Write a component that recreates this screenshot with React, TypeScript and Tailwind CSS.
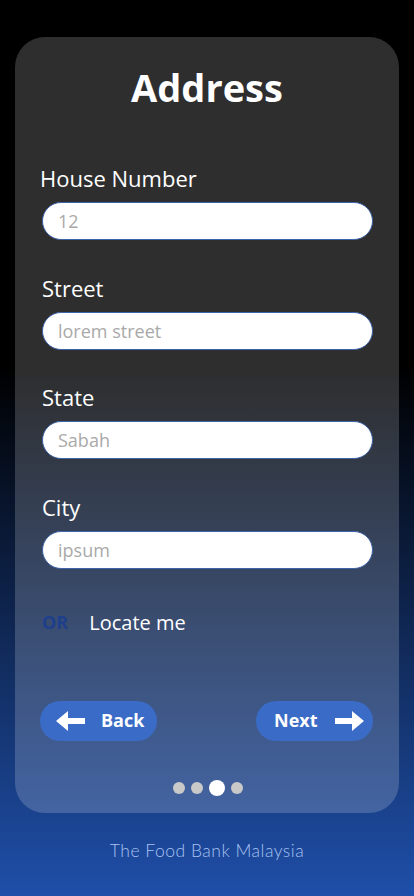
import React from "react";

const fields = [
  { label: "House Number", placeholder: "12" },
  { label: "Street", placeholder: "lorem street" },
  { label: "State", placeholder: "Sabah" },
  { label: "City", placeholder: "ipsum" },
];

function LeftArrow() {
  return (
    <svg width="29" height="20" viewBox="0 0 29 20">
      <path d="M0 10 L12 0 L12 7 L29 7 L29 13 L12 13 L12 20 Z" fill="#fff" />
    </svg>
  );
}

function RightArrow() {
  return (
    <svg width="29" height="20" viewBox="0 0 29 20">
      <path d="M29 10 L17 0 L17 7 L0 7 L0 13 L17 13 L17 20 Z" fill="#fff" />
    </svg>
  );
}

export default function App() {
  return (
    <div
      className="w-[414px] min-h-[896px] flex flex-col items-center bg-[linear-gradient(to_bottom,#000_41%,#1f4fa9_100%)]"
      style={{ fontFamily: '"Open Sans", "Noto Sans", sans-serif' }}
    >
      <div className="mt-[37px] w-[384px] h-[776px] rounded-[30px] bg-white/[0.18] flex flex-col px-[25px]">
        <h1 className="mt-[24px] text-center text-white font-bold text-[38px] leading-[52px]">
          Address
        </h1>

        <div className="mt-[50px] flex flex-col gap-[32.5px]">
          {fields.map((f, i) => (
            <div key={f.label} className="flex flex-col">
              <label
                className={`text-white text-[22px] leading-[30px] mb-[9px] ${
                  i === 0 ? "ml-[0px]" : "ml-[2px]"
                }`}
              >
                {f.label}
              </label>
              <input
                type="text"
                placeholder={f.placeholder}
                className="ml-[2px] w-[331px] h-[38px] rounded-full bg-white border border-[#3d63a8] px-[15px] text-[18px] text-gray-700 outline-none placeholder:text-[#a9a9a9]"
              />
            </div>
          ))}
        </div>

        <div className="mt-[39px] ml-[2px] flex items-center gap-[21px]">
          <span className="text-[#1d3f8c] font-bold text-[18px]">OR</span>
          <span className="text-white text-[20px]">Locate me</span>
        </div>

        <div className="mt-[63px] flex items-center justify-between">
          <button className="w-[117px] h-[40px] rounded-full bg-[#3a6bc6] flex items-center pl-[16px] gap-[16px]">
            <LeftArrow />
            <span className="text-white font-bold text-[18px]">Back</span>
          </button>
          <button className="mr-[1px] w-[117px] h-[40px] rounded-full bg-[#3a6bc6] flex items-center pl-[18px] gap-[17px]">
            <span className="text-white font-bold text-[18px]">Next</span>
            <RightArrow />
          </button>
        </div>

        <div className="mt-[39px] flex items-center justify-center gap-[6px] ml-[2px]">
          <span className="w-[12px] h-[12px] rounded-full bg-[#c9c9c9]" />
          <span className="w-[12px] h-[12px] rounded-full bg-[#c9c9c9]" />
          <span className="w-[16px] h-[16px] rounded-full bg-white" />
          <span className="w-[12px] h-[12px] rounded-full bg-[#c9c9c9]" />
        </div>
      </div>

      <p
        className="mt-[25px] text-[17.5px] font-light tracking-[0.5px] text-[#a9c2f0]"
        style={{ fontFamily: 'Lato, "Open Sans", sans-serif' }}
      >
        The Food Bank Malaysia
      </p>
    </div>
  );
}
